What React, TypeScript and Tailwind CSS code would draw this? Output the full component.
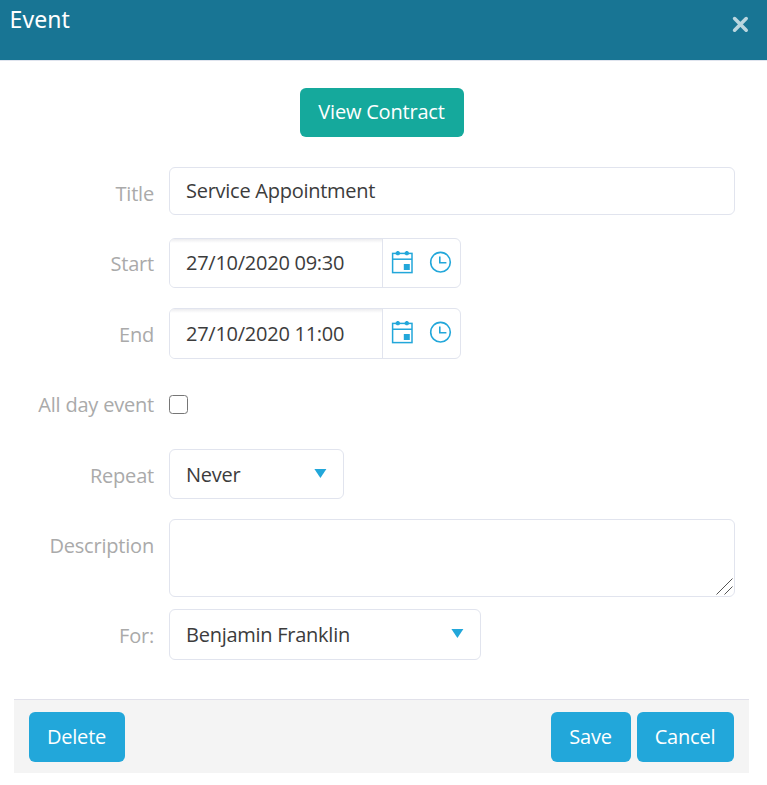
import type { ReactNode } from "react";

function Row({ label, top, labelTop, children }: { label: string; top: string; labelTop: string; children: ReactNode }) {
  return (
    <div className={`flex items-start ${top}`}>
      <label className={`w-[154px] shrink-0 text-right leading-7 whitespace-nowrap text-[#aaaaaa] ${labelTop}`}>{label}</label>
      <div className="ml-[15px] flex tracking-[-0.26px]">{children}</div>
    </div>
  );
}

function CalendarIcon() {
  return (
    <svg width="22" height="23" viewBox="0 0 22 23" fill="none" stroke="#22a7da" strokeWidth="1.5">
      <rect x="1.6" y="2.4" width="19.4" height="19.2" />
      <path d="M1 8.2H21" />
      <path d="M4.8 2.2H8.8M13.8 2.2H17.8" strokeWidth="3" />
      <path d="M6.8 0V4.2M15.8 0V4.2" strokeWidth="2" />
      <rect x="12.8" y="13" width="6" height="6" fill="#22a7da" stroke="none" />
    </svg>
  );
}

function ClockIcon() {
  return (
    <svg width="23" height="22" viewBox="0 0 23 22" fill="none" stroke="#22a7da" strokeWidth="1.6">
      <circle cx="11.5" cy="11.2" r="9.8" />
      <path d="M10.8 5.4V11.8H17.4" />
    </svg>
  );
}

function DateField({ value, height, textTop }: { value: string; height: string; textTop: string }) {
  return (
    <div className={`flex w-[292px] overflow-hidden rounded-md border border-[#e1e4ee] ${height}`}>
      <div className={`w-[212px] bg-linear-to-b from-[#ececef] to-white to-[4px] pl-4 leading-7 whitespace-nowrap ${textTop}`}>{value}</div>
      <div className="flex flex-1 items-start border-l border-[#e1e4ee] pt-3 pl-2">
        <CalendarIcon />
        <span className="ml-4">
          <ClockIcon />
        </span>
      </div>
    </div>
  );
}

function Caret() {
  return (
    <svg width="13" height="9" viewBox="0 0 13 9" className="mt-[19px] shrink-0" fill="#22a7da">
      <path d="M.4 0H12.4L6.4 9Z" />
    </svg>
  );
}

function Select({ value, size }: { value: string; size: string }) {
  return (
    <div className={`flex justify-between rounded-md border border-[#e1e4ee] pr-4 pl-4 ${size}`}>
      <span className="pt-[11px] leading-7 whitespace-nowrap">{value}</span>
      <Caret />
    </div>
  );
}

function Action({ children, size }: { children: string; size: string }) {
  return (
    <button className={`h-[50px] rounded-md bg-[#22a7da] pr-px leading-7 whitespace-nowrap text-white ${size}`}>{children}</button>
  );
}

export default function App() {
  return (
    <div className="h-[785px] w-[767px] overflow-hidden bg-white font-['Open_Sans',sans-serif] text-[20px] tracking-[-0.2px] text-[#3c3c3c]">
      <header className="flex h-[61px] items-start justify-between border-b border-[#dfe4ee] bg-[#187594] pr-[18px] pl-[9.5px]">
        <h1 className="pt-[3px] font-['Noto_Sans',sans-serif] text-[23px] leading-8 tracking-[0.1px] text-white">Event</h1>
        <button aria-label="Close" className="mt-4">
          <svg width="17" height="17" viewBox="0 0 17 17" stroke="#bad6df" strokeWidth="3.6" strokeLinecap="round">
            <path d="M2.6 2.6L14.2 14.2M14.2 2.6L2.6 14.2" />
          </svg>
        </button>
      </header>

      <div className="flex pt-[27px] pl-[300px]">
        <button className="h-[49px] w-[164px] rounded-md bg-[#15a99c] pr-px pb-[2px] leading-7 whitespace-nowrap text-white">View Contract</button>
      </div>

      <Row label="Title" top="mt-[30px] h-12" labelTop="pt-[13px]">
        <div className="h-12 w-[566px] rounded-md border border-[#e1e4ee] pt-[9px] pl-4 leading-7">Service Appointment</div>
      </Row>
      <Row label="Start" top="mt-[23px] h-[50px]" labelTop="pt-3">
        <DateField value="27/10/2020 09:30" height="h-[50px]" textTop="pt-[10px]" />
      </Row>
      <Row label="End" top="mt-5 h-[51px]" labelTop="pt-[13px]">
        <DateField value="27/10/2020 11:00" height="h-[51px]" textTop="pt-[11px]" />
      </Row>
      <Row label="All day event" top="mt-[30px] h-[30px]" labelTop="pt-[2px]">
        <input type="checkbox" className="mt-[6px] size-[19px] appearance-none rounded-[3.5px] border border-[#767676] bg-white" />
      </Row>
      <Row label="Repeat" top="mt-[30px] h-[50px]" labelTop="pt-[13px]">
        <Select value="Never" size="h-[50px] w-[175px]" />
      </Row>
      <Row label="Description" top="mt-5 h-[78px]" labelTop="pt-[13px]">
        <div className="flex h-[78px] w-[566px] items-end justify-end rounded-md border border-[#e1e4ee] pr-px pb-px">
          <svg width="17" height="17" viewBox="0 0 17 17" stroke="#555" strokeWidth="1">
            <path d="M.5 16.5L16.5 .5M8.5 16.5L16.5 8.5" />
          </svg>
        </div>
      </Row>
      <Row label="For:" top="mt-3 h-[51px]" labelTop="pt-[13px]">
        <Select value="Benjamin Franklin" size="h-[51px] w-[312px]" />
      </Row>

      <footer className="mt-[39px] ml-[14px] flex h-[74px] w-[735px] items-start border-t border-[#e1e1ea] bg-[#f4f4f4] pt-3 pl-[15px]">
        <Action size="w-24">Delete</Action>
        <div className="mr-[15px] ml-auto flex gap-[6px]">
          <Action size="w-20">Save</Action>
          <Action size="w-[97px]">Cancel</Action>
        </div>
      </footer>
    </div>
  );
}
